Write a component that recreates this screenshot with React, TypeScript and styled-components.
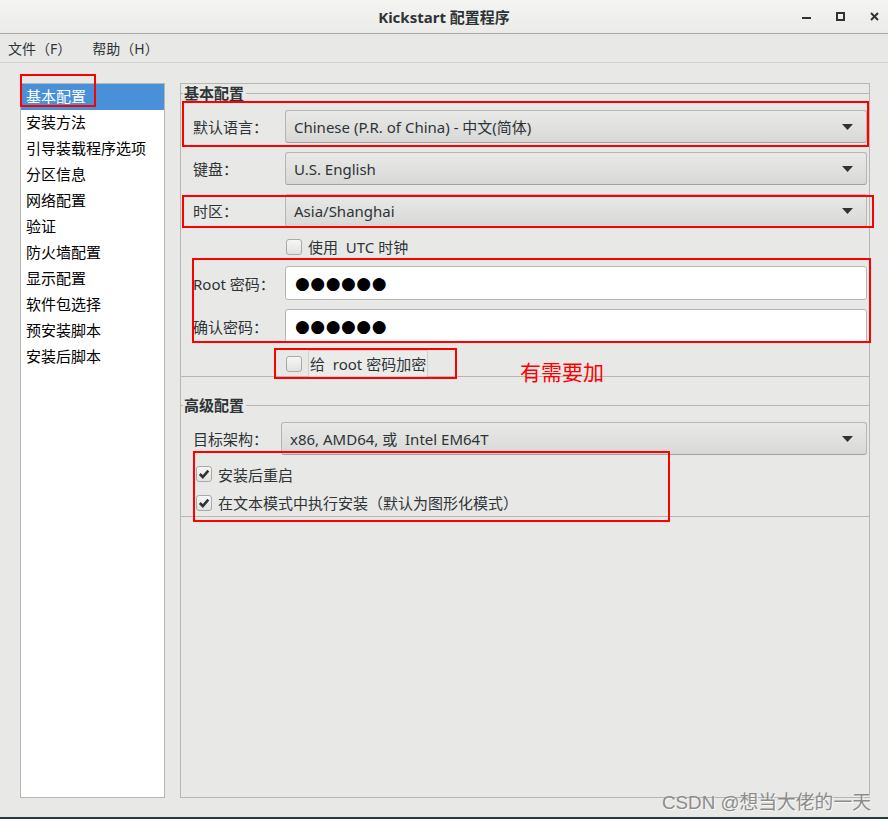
import React from "react";
import styled, { createGlobalStyle } from "styled-components";

const GlobalStyle = createGlobalStyle`
  html, body {
    margin: 0;
    padding: 0;
    background: #e8e8e7;
  }
  body {
    font-family: "Noto Sans", "Noto Sans CJK SC", sans-serif;
    color: #2e3436;
  }
`;

const Window = styled.div`
  position: relative;
  width: 888px;
  height: 819px;
  display: flex;
  flex-direction: column;
  background: #e8e8e7;
  overflow: hidden;
  border-bottom: 2px solid #263a43;
  box-sizing: border-box;
`;

const TitleBar = styled.div`
  height: 33px;
  flex: none;
  display: flex;
  align-items: center;
  justify-content: center;
  position: relative;
  background: linear-gradient(#f4f4f3, #ebebea);
  border-bottom: 1px solid #a8a8a4;
`;

const Title = styled.div`
  font-size: 15px;
  font-weight: bold;
  color: #2e3436;
`;

const WindowButtons = styled.div`
  position: absolute;
  right: 9px;
  top: 0;
  height: 33px;
  display: flex;
  align-items: center;
  gap: 25px;
`;

const MenuBar = styled.div`
  height: 28px;
  flex: none;
  display: flex;
  align-items: center;
  gap: 21px;
  padding-left: 8px;
  border-bottom: 1px solid #d3d3d0;
  font-size: 14px;
`;

const MenuItem = styled.span`
  color: #2e3436;
`;

const Main = styled.div`
  flex: 1;
  display: flex;
  gap: 15px;
  padding: 20px 18px 19px 20px;
  min-height: 0;
`;

const NavList = styled.ul`
  width: 145px;
  flex: none;
  margin: 0;
  padding: 0;
  list-style: none;
  background: #ffffff;
  border: 1px solid #b6b6b3;
  box-sizing: border-box;
`;

const NavItem = styled.li<{ $active?: boolean }>`
  height: 26px;
  line-height: 25px;
  padding-left: 5px;
  font-size: 15px;
  color: ${(p) => (p.$active ? "#ffffff" : "#000000")};
  background: ${(p) => (p.$active ? "#4a90d9" : "transparent")};
`;

const Panel = styled.div`
  flex: 1;
  border: 1px solid #b6b6b3;
  display: flex;
  flex-direction: column;
  gap: 19px;
`;

const Frame = styled.fieldset`
  margin: 0;
  padding: 8px 2px 0 12px;
  border: none;
  border-top: 1px solid #b6b6b3;
  border-bottom: 1px solid #b6b6b3;
  min-width: 0;
`;

const Legend = styled.legend`
  padding: 0 2px 0 1px;
  margin-left: -10px;
  font-size: 15px;
  font-weight: bold;
  line-height: 18px;
  color: #2e3436;
`;

const Row = styled.div<{ $labelWidth?: number }>`
  display: grid;
  grid-template-columns: ${(p) => p.$labelWidth ?? 92}px 1fr;
  align-items: center;
  margin-bottom: 9px;
`;

const Label = styled.span`
  font-size: 15px;
  color: #2e3436;
`;

const Combo = styled.div`
  height: 33px;
  box-sizing: border-box;
  display: flex;
  align-items: center;
  justify-content: space-between;
  padding: 0 13px 0 8px;
  border: 1px solid #b6b6b3;
  border-bottom-color: #a1a1a0;
  border-radius: 3px;
  background: linear-gradient(#e9e9e8, #d8d8d7);
  font-size: 15px;
  color: #2e3436;
`;

const Entry = styled.div`
  height: 34px;
  box-sizing: border-box;
  display: flex;
  align-items: center;
  padding-left: 9px;
  border: 1px solid #b6b6b3;
  border-radius: 3px;
  background: #ffffff;
  font-family: "DejaVu Sans", sans-serif;
  font-size: 17px;
  letter-spacing: 0.5px;
  color: #000000;
`;

const CheckRow = styled.div<{ $indent: number; $height: number }>`
  display: flex;
  align-items: center;
  gap: 6px;
  height: ${(p) => p.$height}px;
  padding-left: ${(p) => p.$indent}px;
  font-size: 15px;
  color: #2e3436;
`;

const Box = styled.span`
  width: 16px;
  height: 16px;
  box-sizing: border-box;
  border: 1px solid #a9a9a7;
  border-radius: 3px;
  background: linear-gradient(#f6f6f6, #e2e2e1);
  display: flex;
  align-items: center;
  justify-content: center;
  flex: none;
`;

const Highlight = styled.span`
  padding: 2px 1px;
  border: 1px solid #d0d0ce;
  border-radius: 2px;
  background: #ebebea;
`;

const Mark = styled.div<{ $x: number; $y: number; $w: number; $h: number }>`
  position: absolute;
  left: ${(p) => p.$x}px;
  top: ${(p) => p.$y}px;
  width: ${(p) => p.$w}px;
  height: ${(p) => p.$h}px;
  border: 2px solid #ff0000;
  box-sizing: border-box;
  pointer-events: none;
`;

const Note = styled.div`
  position: absolute;
  left: 520px;
  top: 356px;
  font-size: 21px;
  color: #ff0000;
`;

const Watermark = styled.div`
  position: absolute;
  left: 662px;
  top: 787px;
  font-family: "Liberation Sans", "Noto Sans CJK SC", sans-serif;
  font-size: 18.8px;
  color: #8c8c8c;
  text-shadow: 1px 1px 0 rgba(255, 255, 255, 0.7);
`;

const Arrow = () => (
  <svg width="11" height="6" viewBox="0 0 11 6">
    <path d="M0 0 L11 0 L5.5 6 Z" fill="#2e3436" />
  </svg>
);

const Check = ({ checked }: { checked?: boolean }) => (
  <Box>
    {checked && (
      <svg width="12" height="12" viewBox="0 0 12 12">
        <path
          d="M1.8 6 L4.8 9 L10.3 2.6"
          fill="none"
          stroke="#2e3436"
          strokeWidth="2.6"
        />
      </svg>
    )}
  </Box>
);

const navItems = [
  "基本配置",
  "安装方法",
  "引导装载程序选项",
  "分区信息",
  "网络配置",
  "验证",
  "防火墙配置",
  "显示配置",
  "软件包选择",
  "预安装脚本",
  "安装后脚本",
];

export default function App() {
  return (
    <Window>
      <GlobalStyle />
      <TitleBar>
        <Title>Kickstart 配置程序</Title>
        <WindowButtons>
          <svg width="9" height="9" viewBox="0 0 9 9">
            <rect x="0" y="5" width="9" height="2" fill="#2e3436" />
          </svg>
          <svg width="9" height="9" viewBox="0 0 9 9">
            <rect x="1" y="1" width="7" height="7" fill="none" stroke="#2e3436" strokeWidth="2" />
          </svg>
          <svg width="9" height="9" viewBox="0 0 9 9">
            <path d="M1 1 L8 8 M8 1 L1 8" stroke="#2e3436" strokeWidth="2" />
          </svg>
        </WindowButtons>
      </TitleBar>
      <MenuBar>
        <MenuItem>文件（F）</MenuItem>
        <MenuItem>帮助（H）</MenuItem>
      </MenuBar>
      <Main>
        <NavList>
          {navItems.map((item, i) => (
            <NavItem key={item} $active={i === 0}>
              {item}
            </NavItem>
          ))}
        </NavList>
        <Panel>
          <Frame>
            <Legend>基本配置</Legend>
            <Row>
              <Label>默认语言：</Label>
              <Combo>
                Chinese (P.R. of China) - 中文(简体)
                <Arrow />
              </Combo>
            </Row>
            <Row>
              <Label>键盘：</Label>
              <Combo>
                U.S. English
                <Arrow />
              </Combo>
            </Row>
            <Row>
              <Label>时区：</Label>
              <Combo>
                Asia/Shanghai
                <Arrow />
              </Combo>
            </Row>
            <CheckRow $indent={93} $height={21} style={{ marginBottom: 9 }}>
              <Check />
              使用&nbsp; UTC 时钟
            </CheckRow>
            <Row>
              <Label>Root 密码：</Label>
              <Entry>●●●●●●</Entry>
            </Row>
            <Row style={{ marginBottom: 8 }}>
              <Label>确认密码：</Label>
              <Entry>●●●●●●</Entry>
            </Row>
            <CheckRow $indent={93} $height={25}>
              <Check />
              <Highlight>给&nbsp; root 密码加密</Highlight>
            </CheckRow>
          </Frame>
          <Frame>
            <Legend>高级配置</Legend>
            <Row $labelWidth={88} style={{ marginBottom: 4 }}>
              <Label>目标架构：</Label>
              <Combo>
                x86, AMD64, 或&nbsp; Intel EM64T
                <Arrow />
              </Combo>
            </Row>
            <CheckRow $indent={3} $height={30}>
              <Check checked />
              安装后重启
            </CheckRow>
            <CheckRow $indent={3} $height={27}>
              <Check checked />
              在文本模式中执行安装（默认为图形化模式）
            </CheckRow>
          </Frame>
        </Panel>
      </Main>

      <Mark $x={20} $y={74} $w={76} $h={33} />
      <Mark $x={182} $y={101} $w={687} $h={46} />
      <Mark $x={182} $y={195} $w={692} $h={33} />
      <Mark $x={192} $y={258} $w={679} $h={85} />
      <Mark $x={274} $y={348} $w={183} $h={31} />
      <Mark $x={193} $y={451} $w={477} $h={71} />
      <Note>有需要加</Note>
      <Watermark>CSDN @想当大佬的一天</Watermark>
    </Window>
  );
}
